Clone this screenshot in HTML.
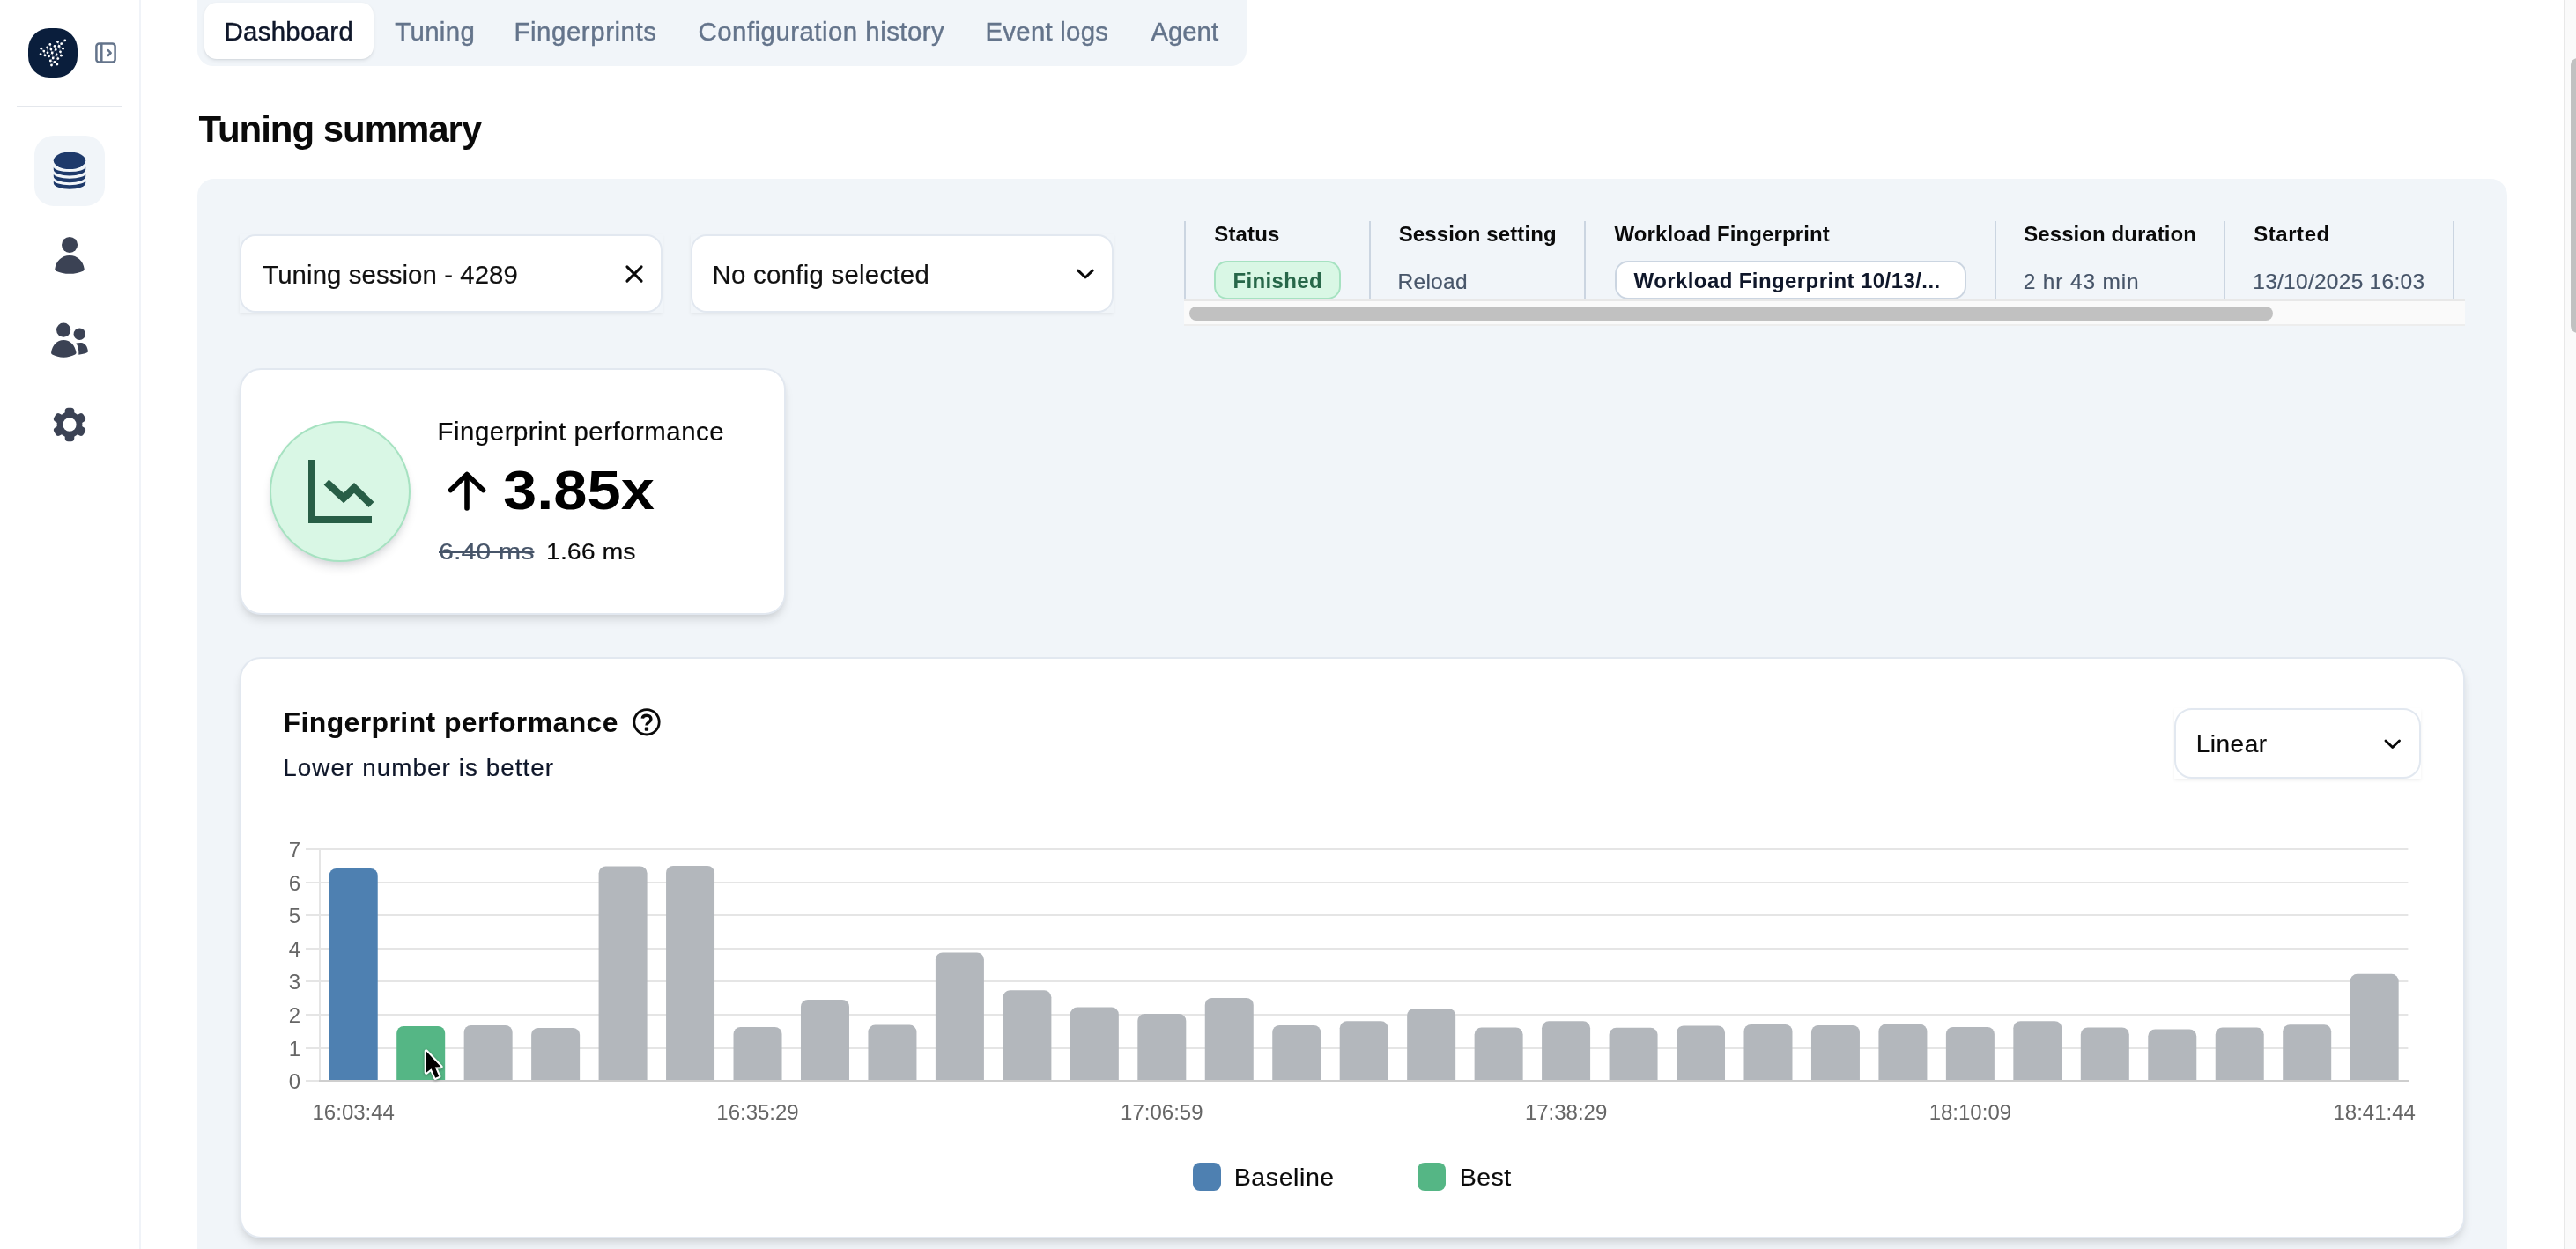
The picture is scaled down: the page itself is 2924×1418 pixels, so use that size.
<!DOCTYPE html>
<html lang="en">
<head>
<meta charset="utf-8">
<title>Tuning summary</title>
<style>
*{box-sizing:border-box;margin:0;padding:0}
html,body{width:2924px;height:1418px;overflow:hidden;background:#fff}
body{position:relative;font-family:"Liberation Sans",Arial,Helvetica,sans-serif;color:#0a0a0a}
.abs{position:absolute}
.t{position:absolute;white-space:nowrap;line-height:1;font-weight:400}
.chart{position:absolute;left:0;top:0;pointer-events:none}
.tick{font-family:"Liberation Sans",Arial,sans-serif;font-size:24px;fill:#666}
.card{position:absolute;background:#fff;border:2px solid #e2e8f0;border-radius:24px;box-shadow:0 8px 12px -2px rgba(0,0,0,.10),0 4px 8px -4px rgba(0,0,0,.10)}
.sel{position:absolute;background:#fff;border:2px solid #e2e8f0;border-radius:18px}
.selsh{position:absolute;box-shadow:0 2px 4px rgba(0,0,0,.06)}
.vd{position:absolute;top:251px;width:2px;height:90px;background:#cbd5e1}
svg{display:block}
</style>
</head>
<body>
<!-- sidebar -->
<div class="abs" style="left:158px;top:0;width:2px;height:1418px;background:#f0f3f8"></div>
<div class="abs" style="left:32px;top:32px;width:56px;height:56px;border-radius:24px;background:#0a1e3c"></div>
<svg class="abs" style="left:0;top:0" width="160" height="540" viewBox="0 0 160 540">
<g stroke="#fff" stroke-width="0.55" opacity="0.6"><path d="M73.75,45.9L69.7,49.7"/><path d="M69.7,49.7L67,52.5"/><path d="M65.5,47.5L67,52.5"/><path d="M67,52.5L63.2,56.4"/><path d="M63.2,56.4L62,52.4"/><path d="M56.8,50.4L57.9,56"/><path d="M57.9,56L59.2,60"/><path d="M53.6,54L54,59.8"/><path d="M46.8,55.2L49.8,58.1"/><path d="M49.8,58.1L51,62.9"/><path d="M54,59.8L55.5,63.9"/><path d="M59.2,60L55.5,63.9"/><path d="M63.2,56.4L59.2,60"/><path d="M59.2,60L60.2,66"/><path d="M64.2,62L60.2,66"/><path d="M60.2,66L57.3,69"/><path d="M57.3,69L62,70.4"/><path d="M65.8,66.6L62,70.4"/><path d="M65.8,66.6L64.2,62"/><path d="M62,70.4L58.5,74"/><path d="M68.5,58.8L67,52.5"/><path d="M71.6,55.2L67,52.5"/><path d="M69.4,63.2L68.5,58.8"/><path d="M64.2,62L63.2,56.4"/><path d="M64.9,73L62,70.4"/></g><g fill="#fff"><circle cx="73.75" cy="45.9" r="1.4"/><circle cx="65.5" cy="47.5" r="1.4"/><circle cx="69.7" cy="49.7" r="1.4"/><circle cx="56.8" cy="50.4" r="1.4"/><circle cx="62" cy="52.4" r="1.4"/><circle cx="67" cy="52.5" r="1.4"/><circle cx="53.6" cy="54" r="1.4"/><circle cx="46.8" cy="55.2" r="1.4"/><circle cx="57.9" cy="56" r="1.4"/><circle cx="63.2" cy="56.4" r="1.4"/><circle cx="71.6" cy="55.2" r="1.4"/><circle cx="49.8" cy="58.1" r="1.4"/><circle cx="54" cy="59.8" r="1.4"/><circle cx="59.2" cy="60" r="1.4"/><circle cx="68.5" cy="58.8" r="1.4"/><circle cx="46.1" cy="61.7" r="1.4"/><circle cx="51" cy="62.9" r="1.4"/><circle cx="55.5" cy="63.9" r="1.4"/><circle cx="64.2" cy="62" r="1.4"/><circle cx="69.4" cy="63.2" r="1.4"/><circle cx="60.2" cy="66" r="1.4"/><circle cx="65.8" cy="66.6" r="1.4"/><circle cx="57.3" cy="69" r="1.4"/><circle cx="62" cy="70.4" r="1.4"/><circle cx="64.9" cy="73" r="1.4"/><circle cx="58.5" cy="74" r="1.4"/></g>
<!-- toggle -->
<g fill="none" stroke="#64748b" stroke-width="2.5" stroke-linecap="round" stroke-linejoin="round">
<rect x="109.4" y="49.4" width="21.2" height="21.2" rx="3.2"/>
<path d="M115.3 50v20"/>
<path d="M122.8 57.2l2.9 2.9-2.9 2.9"/>
</g>
<rect x="19" y="120" width="120" height="2" fill="#e4e7ec"/>
<rect x="39" y="154" width="80" height="80" rx="22" fill="#f1f5f9"/>
<!-- database -->
<g fill="#1e3a6b" transform="translate(39,154)">
<ellipse cx="40" cy="28.3" rx="18.2" ry="9.7"/>
<path d="M21.8,35.6V38.5A18.2,7.1 0 0 0 58.2,38.5V35.6A18.2,5.4 0 0 1 21.8,35.6Z"/>
<path d="M21.8,43.3V46.2A18.2,7.1 0 0 0 58.2,46.2V43.3A18.2,5.4 0 0 1 21.8,43.3Z"/>
<path d="M21.8,50.8V53.7A18.2,7.1 0 0 0 58.2,53.7V50.8A18.2,5.4 0 0 1 21.8,50.8Z"/>
</g>
<!-- user -->
<g fill="#3b4254" transform="translate(39,250)">
<circle cx="40.05" cy="27.95" r="9.05"/>
<path d="M23.3,55.3C24.6,46 31.2,39.9 40,39.9C48.8,39.9 55.4,46 56.7,55.3C56.8,56.4 56.3,57.3 55.3,57.7C51,59.7 45.8,60.8 40,60.8C34.2,60.8 29,59.7 24.7,57.7C23.7,57.3 23.2,56.4 23.3,55.3Z"/>
</g>
<!-- users -->
<g fill="#3b4254" transform="translate(39,346)">
<circle cx="33.1" cy="28.65" r="8.05"/>
<circle cx="51.3" cy="33.2" r="6.7"/>
<path d="M19.1,54.3C20.3,45.8 25.8,39.9 33.2,39.9C40.6,39.9 46.2,45.8 47.5,54.3C47.6,55.3 47.1,56.1 46.2,56.5C42.4,58.5 38,59.7 33.2,59.7C28.4,59.7 24,58.5 20.3,56.5C19.4,56.1 19,55.3 19.1,54.3Z"/>
<path d="M47.4,43.6C49.2,43.2 51.2,43 53.2,43.1C57.6,43.5 60.3,47.5 60.9,52.6C61,53.4 60.6,54 59.9,54.3C57,55.6 53.8,56.4 50.3,56.7C50.6,52 49.8,47.3 47.4,43.6Z"/>
</g>
<!-- gear -->
<g transform="translate(79,482) scale(0.975)">
<g fill="#3b4254">
<circle r="14.8"/>
<rect x="-5.4" y="-19.8" width="10.8" height="14" rx="3.8"/>
<rect x="-5.4" y="-19.8" width="10.8" height="14" rx="3.8" transform="rotate(60)"/>
<rect x="-5.4" y="-19.8" width="10.8" height="14" rx="3.8" transform="rotate(120)"/>
<rect x="-5.4" y="-19.8" width="10.8" height="14" rx="3.8" transform="rotate(180)"/>
<rect x="-5.4" y="-19.8" width="10.8" height="14" rx="3.8" transform="rotate(240)"/>
<rect x="-5.4" y="-19.8" width="10.8" height="14" rx="3.8" transform="rotate(300)"/>
</g>
<circle r="7.85" fill="#fff"/>
</g>
</svg>

<!-- tab bar -->
<div class="abs" style="left:224px;top:-20px;width:1191px;height:94.5px;border-radius:18px;background:#f1f5f9"></div>
<div class="abs" style="left:232px;top:3px;width:192px;height:64px;border-radius:14px;background:#fff;box-shadow:0 2px 4px rgba(15,23,42,.08),0 1px 2px rgba(15,23,42,.06)"></div>

<!-- panel -->
<div class="abs" style="left:224px;top:203px;width:2622px;height:1300px;border-radius:19px;background:#f1f5f9"></div>

<!-- vertical page scrollbar -->
<div class="abs" style="left:2910px;top:0;width:14px;height:1418px;background:#fafafa;border-left:2px solid #e8e8e8"></div>
<div class="abs" style="left:2918px;top:66px;width:16px;height:312px;border-radius:8px;background:#c1c1c1"></div>

<!-- selects -->
<div class="selsh" style="left:272px;top:266px;width:480px;height:89px"></div>
<div class="sel" style="left:272px;top:266px;width:480px;height:89px"></div>
<div class="selsh" style="left:784px;top:266px;width:480px;height:89px"></div>
<div class="sel" style="left:784px;top:266px;width:480px;height:89px"></div>
<svg class="abs" style="left:704px;top:295px" width="32" height="32" viewBox="0 0 32 32"><path d="M7.9 7.9L24.1 24.1M24.1 7.9L7.9 24.1" stroke="#0a0a0a" stroke-width="3" fill="none" stroke-linecap="round"/></svg>
<svg class="abs" style="left:1216px;top:295px" width="32" height="32" viewBox="0 0 32 32"><path d="M7.8 12.2L16 20L24.2 12.2" stroke="#0a0a0a" stroke-width="3" fill="none" stroke-linecap="round" stroke-linejoin="round"/></svg>

<!-- status table -->
<div class="vd" style="left:1344px"></div>
<div class="vd" style="left:1554px"></div>
<div class="vd" style="left:1798px"></div>
<div class="vd" style="left:2264px"></div>
<div class="vd" style="left:2524px"></div>
<div class="vd" style="left:2784px"></div>
<div class="abs" style="left:1344px;top:340px;width:1454px;height:30px;background:#fafafa;border-top:2px solid #e8e8e8;border-bottom:2px solid #ededed"></div>
<div class="abs" style="left:1350px;top:348px;width:1230px;height:16px;border-radius:8px;background:#c1c1c1"></div>
<div class="abs" style="left:1378px;top:296px;width:144px;height:44px;border-radius:15px;background:#d9f7e5;border:2px solid #a6e2c1"></div>
<div class="abs" style="left:1832.5px;top:296px;width:399px;height:44px;border-radius:15px;background:#fff;border:2px solid #cbd5e1"></div>

<!-- perf card -->
<div class="card" style="left:272px;top:418px;width:620px;height:280px"></div>
<div class="abs" style="left:306px;top:478px;width:160px;height:160px;border-radius:50%;background:#d9f7e5;border:2px solid #a6e2c1;box-shadow:0 8px 12px -2px rgba(15,23,42,.12),0 4px 8px -4px rgba(15,23,42,.12)"></div>
<svg class="abs" style="left:306px;top:478px" width="160" height="160" viewBox="306 478 160 160">
<path d="M354 522v68h68" fill="none" stroke="#285e46" stroke-width="8"/>
<path d="M370.5 547.5l19.5 18 12-11.5 19.5 19" fill="none" stroke="#285e46" stroke-width="8.5"/>
</svg>
<svg class="abs" style="left:500px;top:530px" width="60" height="56" viewBox="500 530 60 56"><path d="M530 577v-38M511.5 556.5L530 538.5l18.5 18" fill="none" stroke="#000" stroke-width="5.6" stroke-linecap="round" stroke-linejoin="round"/></svg>

<!-- chart card -->
<div class="card" style="left:272px;top:746px;width:2526px;height:660px"></div>
<svg class="abs" style="left:716px;top:802px" width="36" height="36" viewBox="0 0 36 36"><circle cx="18" cy="17.8" r="14.2" fill="none" stroke="#0a0a0a" stroke-width="2.8"/><path d="M13.3 13.7C13.5 11.2 15.5 10.2 18 10.2C20.9 10.2 22.9 11.9 22.9 14.3C22.9 17.9 18 18 18 21.5" fill="none" stroke="#0a0a0a" stroke-width="3.5" stroke-linejoin="round"/><rect x="15.8" y="23.5" width="4.3" height="4.3" rx="1" fill="#0a0a0a"/></svg>
<div class="selsh" style="left:2468px;top:804px;width:280px;height:80px"></div>
<div class="sel" style="left:2468px;top:804px;width:280px;height:80px;border-radius:20px"></div>
<svg class="abs" style="left:2700px;top:828px" width="32" height="32" viewBox="0 0 32 32"><path d="M8 13L15.75 20.5L23.5 13" stroke="#0a0a0a" stroke-width="2.9" fill="none" stroke-linecap="round" stroke-linejoin="round"/></svg>

<div class="abs" style="left:0;top:0;width:2924px;height:1418px;will-change:transform">
<svg class="chart" width="2924" height="1418" viewBox="0 0 2924 1418">
<rect x="347" y="1226" width="2386.40" height="2" fill="#e5e5e5"/>
<rect x="347" y="1189" width="2386.40" height="2" fill="#e5e5e5"/>
<rect x="347" y="1151" width="2386.40" height="2" fill="#e5e5e5"/>
<rect x="347" y="1113" width="2386.40" height="2" fill="#e5e5e5"/>
<rect x="347" y="1076" width="2386.40" height="2" fill="#e5e5e5"/>
<rect x="347" y="1038" width="2386.40" height="2" fill="#e5e5e5"/>
<rect x="347" y="1001" width="2386.40" height="2" fill="#e5e5e5"/>
<rect x="347" y="963" width="2386.40" height="2" fill="#e5e5e5"/>
<rect x="362.00" y="964.00" width="2" height="263.00" fill="#e5e5e5"/>
<path d="M373.73,1226.00V994.00a8,8 0 0 1 8,-8h39.00a8,8 0 0 1 8,8V1226.00z" fill="#4e80b1"/>
<path d="M450.20,1226.00V1173.00a8,8 0 0 1 8,-8h39.00a8,8 0 0 1 8,8V1226.00z" fill="#55b685"/>
<path d="M526.66,1226.00V1172.00a8,8 0 0 1 8,-8h39.00a8,8 0 0 1 8,8V1226.00z" fill="#b3b7bc"/>
<path d="M603.13,1226.00V1175.00a8,8 0 0 1 8,-8h39.00a8,8 0 0 1 8,8V1226.00z" fill="#b3b7bc"/>
<path d="M679.59,1226.00V991.50a8,8 0 0 1 8,-8h39.00a8,8 0 0 1 8,8V1226.00z" fill="#b3b7bc"/>
<path d="M756.05,1226.00V991.00a8,8 0 0 1 8,-8h39.00a8,8 0 0 1 8,8V1226.00z" fill="#b3b7bc"/>
<path d="M832.52,1226.00V1174.00a8,8 0 0 1 8,-8h39.00a8,8 0 0 1 8,8V1226.00z" fill="#b3b7bc"/>
<path d="M908.98,1226.00V1143.00a8,8 0 0 1 8,-8h39.00a8,8 0 0 1 8,8V1226.00z" fill="#b3b7bc"/>
<path d="M985.45,1226.00V1171.60a8,8 0 0 1 8,-8h39.00a8,8 0 0 1 8,8V1226.00z" fill="#b3b7bc"/>
<path d="M1061.91,1226.00V1089.40a8,8 0 0 1 8,-8h39.00a8,8 0 0 1 8,8V1226.00z" fill="#b3b7bc"/>
<path d="M1138.38,1226.00V1132.30a8,8 0 0 1 8,-8h39.00a8,8 0 0 1 8,8V1226.00z" fill="#b3b7bc"/>
<path d="M1214.84,1226.00V1151.60a8,8 0 0 1 8,-8h39.00a8,8 0 0 1 8,8V1226.00z" fill="#b3b7bc"/>
<path d="M1291.31,1226.00V1159.00a8,8 0 0 1 8,-8h39.00a8,8 0 0 1 8,8V1226.00z" fill="#b3b7bc"/>
<path d="M1367.77,1226.00V1140.90a8,8 0 0 1 8,-8h39.00a8,8 0 0 1 8,8V1226.00z" fill="#b3b7bc"/>
<path d="M1444.24,1226.00V1172.00a8,8 0 0 1 8,-8h39.00a8,8 0 0 1 8,8V1226.00z" fill="#b3b7bc"/>
<path d="M1520.70,1226.00V1167.30a8,8 0 0 1 8,-8h39.00a8,8 0 0 1 8,8V1226.00z" fill="#b3b7bc"/>
<path d="M1597.16,1226.00V1153.00a8,8 0 0 1 8,-8h39.00a8,8 0 0 1 8,8V1226.00z" fill="#b3b7bc"/>
<path d="M1673.63,1226.00V1174.40a8,8 0 0 1 8,-8h39.00a8,8 0 0 1 8,8V1226.00z" fill="#b3b7bc"/>
<path d="M1750.09,1226.00V1167.30a8,8 0 0 1 8,-8h39.00a8,8 0 0 1 8,8V1226.00z" fill="#b3b7bc"/>
<path d="M1826.56,1226.00V1174.80a8,8 0 0 1 8,-8h39.00a8,8 0 0 1 8,8V1226.00z" fill="#b3b7bc"/>
<path d="M1903.02,1226.00V1172.50a8,8 0 0 1 8,-8h39.00a8,8 0 0 1 8,8V1226.00z" fill="#b3b7bc"/>
<path d="M1979.49,1226.00V1171.00a8,8 0 0 1 8,-8h39.00a8,8 0 0 1 8,8V1226.00z" fill="#b3b7bc"/>
<path d="M2055.95,1226.00V1172.00a8,8 0 0 1 8,-8h39.00a8,8 0 0 1 8,8V1226.00z" fill="#b3b7bc"/>
<path d="M2132.42,1226.00V1170.80a8,8 0 0 1 8,-8h39.00a8,8 0 0 1 8,8V1226.00z" fill="#b3b7bc"/>
<path d="M2208.88,1226.00V1174.00a8,8 0 0 1 8,-8h39.00a8,8 0 0 1 8,8V1226.00z" fill="#b3b7bc"/>
<path d="M2285.35,1226.00V1167.20a8,8 0 0 1 8,-8h39.00a8,8 0 0 1 8,8V1226.00z" fill="#b3b7bc"/>
<path d="M2361.81,1226.00V1174.40a8,8 0 0 1 8,-8h39.00a8,8 0 0 1 8,8V1226.00z" fill="#b3b7bc"/>
<path d="M2438.27,1226.00V1176.40a8,8 0 0 1 8,-8h39.00a8,8 0 0 1 8,8V1226.00z" fill="#b3b7bc"/>
<path d="M2514.74,1226.00V1174.40a8,8 0 0 1 8,-8h39.00a8,8 0 0 1 8,8V1226.00z" fill="#b3b7bc"/>
<path d="M2591.20,1226.00V1171.20a8,8 0 0 1 8,-8h39.00a8,8 0 0 1 8,8V1226.00z" fill="#b3b7bc"/>
<path d="M2667.67,1226.00V1113.80a8,8 0 0 1 8,-8h39.00a8,8 0 0 1 8,8V1226.00z" fill="#b3b7bc"/>
<rect x="362" y="1226.00" width="2372.40" height="2" fill="#cecece"/>
<text x="341" y="1235.60" text-anchor="end" class="tick">0</text>
<text x="341" y="1198.60" text-anchor="end" class="tick">1</text>
<text x="341" y="1160.60" text-anchor="end" class="tick">2</text>
<text x="341" y="1122.60" text-anchor="end" class="tick">3</text>
<text x="341" y="1085.60" text-anchor="end" class="tick">4</text>
<text x="341" y="1047.60" text-anchor="end" class="tick">5</text>
<text x="341" y="1010.60" text-anchor="end" class="tick">6</text>
<text x="341" y="972.60" text-anchor="end" class="tick">7</text>
<text x="401.23" y="1271" text-anchor="middle" class="tick">16:03:44</text>
<text x="860.02" y="1271" text-anchor="middle" class="tick">16:35:29</text>
<text x="1318.81" y="1271" text-anchor="middle" class="tick">17:06:59</text>
<text x="1777.59" y="1271" text-anchor="middle" class="tick">17:38:29</text>
<text x="2236.38" y="1271" text-anchor="middle" class="tick">18:10:09</text>
<text x="2695.17" y="1271" text-anchor="middle" class="tick">18:41:44</text>
<rect x="1354" y="1320" width="32" height="32" rx="8" fill="#4e80b1"/>
<rect x="1609" y="1320" width="32" height="32" rx="8" fill="#55b685"/>
<path d="M483.8,1193.4L483.8,1217.8L489.6,1213.2L494.2,1223.8L498.3,1222L493.8,1211.6L500.6,1211.2Z" fill="#000" stroke="#fff" stroke-width="4.2" stroke-linejoin="round" paint-order="stroke" style="filter:drop-shadow(0 1.5px 1.5px rgba(0,0,0,.35))"/>
</svg>
<span class="t" style="left:254.50px;top:20.61px;font-size:29.4px;letter-spacing:0.312px;color:#0f172a;-webkit-text-stroke:0.45px #0f172a;">Dashboard</span>
<span class="t" style="left:448.25px;top:20.61px;font-size:29.4px;letter-spacing:0.350px;color:#64748b;-webkit-text-stroke:0.4px #64748b;">Tuning</span>
<span class="t" style="left:583.50px;top:20.61px;font-size:29.4px;letter-spacing:0.568px;color:#64748b;-webkit-text-stroke:0.4px #64748b;">Fingerprints</span>
<span class="t" style="left:792.50px;top:20.61px;font-size:29.4px;letter-spacing:0.487px;color:#64748b;-webkit-text-stroke:0.4px #64748b;">Configuration history</span>
<span class="t" style="left:1118.50px;top:20.61px;font-size:29.4px;letter-spacing:0.250px;color:#64748b;-webkit-text-stroke:0.4px #64748b;">Event logs</span>
<span class="t" style="left:1306.50px;top:20.61px;font-size:29.4px;letter-spacing:-0.062px;color:#64748b;-webkit-text-stroke:0.4px #64748b;">Agent</span>
<span class="t" style="left:225.50px;top:125.95px;font-size:42.0px;letter-spacing:-1.038px;color:#0a0a0a;font-weight:700;">Tuning summary</span>
<span class="t" style="left:298.25px;top:296.61px;font-size:29.4px;letter-spacing:0.075px;color:#111;-webkit-text-stroke:0.2px #111;">Tuning session - 4289</span>
<span class="t" style="left:808.50px;top:296.61px;font-size:29.4px;letter-spacing:0.265px;color:#111;-webkit-text-stroke:0.2px #111;">No config selected</span>
<span class="t" style="left:1378.25px;top:254.18px;font-size:24.0px;letter-spacing:0.150px;color:#0a0a0a;font-weight:700;">Status</span>
<span class="t" style="left:1587.75px;top:254.18px;font-size:24.0px;letter-spacing:0.107px;color:#0a0a0a;font-weight:700;">Session setting</span>
<span class="t" style="left:1832.50px;top:254.18px;font-size:24.0px;letter-spacing:0.105px;color:#0a0a0a;font-weight:700;">Workload Fingerprint</span>
<span class="t" style="left:2297.25px;top:254.18px;font-size:24.0px;letter-spacing:0.067px;color:#0a0a0a;font-weight:700;">Session duration</span>
<span class="t" style="left:2558.25px;top:254.18px;font-size:24.0px;letter-spacing:0.542px;color:#0a0a0a;font-weight:700;">Started</span>
<span class="t" style="left:1399.50px;top:306.68px;font-size:24.0px;letter-spacing:0.357px;color:#276749;font-weight:700;">Finished</span>
<span class="t" style="left:1586.50px;top:308.28px;font-size:24.48px;letter-spacing:0.300px;color:#475569;-webkit-text-stroke:0.2px #475569;">Reload</span>
<span class="t" style="left:1854.50px;top:306.68px;font-size:24.0px;letter-spacing:0.414px;color:#0f172a;font-weight:700;">Workload Fingerprint 10/13/...</span>
<span class="t" style="left:2296.75px;top:308.28px;font-size:24.48px;letter-spacing:0.850px;color:#475569;-webkit-text-stroke:0.2px #475569;">2 hr 43 min</span>
<span class="t" style="left:2557.25px;top:308.28px;font-size:24.48px;letter-spacing:0.283px;color:#475569;-webkit-text-stroke:0.2px #475569;">13/10/2025 16:03</span>
<span class="t" style="left:496.50px;top:475.11px;font-size:29.4px;letter-spacing:0.523px;color:#0a0a0a;-webkit-text-stroke:0.2px #0a0a0a;">Fingerprint performance</span>
<span class="t" style="left:571.36px;top:524.67px;font-size:63.0px;color:#000;transform:scaleX(1.0900);transform-origin:0 0;font-weight:700;">3.85x</span>
<span class="t" style="left:497.56px;top:612.60px;font-size:26.46px;color:#475569;transform:scaleX(1.1522);transform-origin:0 0;-webkit-text-stroke:0.2px #475569;text-decoration:line-through;text-decoration-thickness:2px;">6.40 ms</span>
<span class="t" style="left:619.84px;top:612.60px;font-size:26.46px;color:#0a0a0a;transform:scaleX(1.0795);transform-origin:0 0;-webkit-text-stroke:0.2px #0a0a0a;">1.66 ms</span>
<span class="t" style="left:321.50px;top:803.91px;font-size:32.0px;letter-spacing:0.386px;color:#0a0a0a;font-weight:700;">Fingerprint performance</span>
<span class="t" style="left:321.25px;top:857.94px;font-size:27.83px;letter-spacing:1.060px;color:#0f172a;-webkit-text-stroke:0.2px #0f172a;">Lower number is better</span>
<span class="t" style="left:2492.75px;top:830.70px;font-size:28.0px;letter-spacing:0.490px;color:#0a0a0a;-webkit-text-stroke:0.2px #0a0a0a;">Linear</span>
<span class="t" style="left:1400.75px;top:1322.22px;font-size:28.56px;letter-spacing:0.571px;color:#0a0a0a;-webkit-text-stroke:0.2px #0a0a0a;">Baseline</span>
<span class="t" style="left:1656.75px;top:1322.22px;font-size:28.56px;letter-spacing:0.417px;color:#0a0a0a;-webkit-text-stroke:0.2px #0a0a0a;">Best</span>
</div>
</body>
</html>
